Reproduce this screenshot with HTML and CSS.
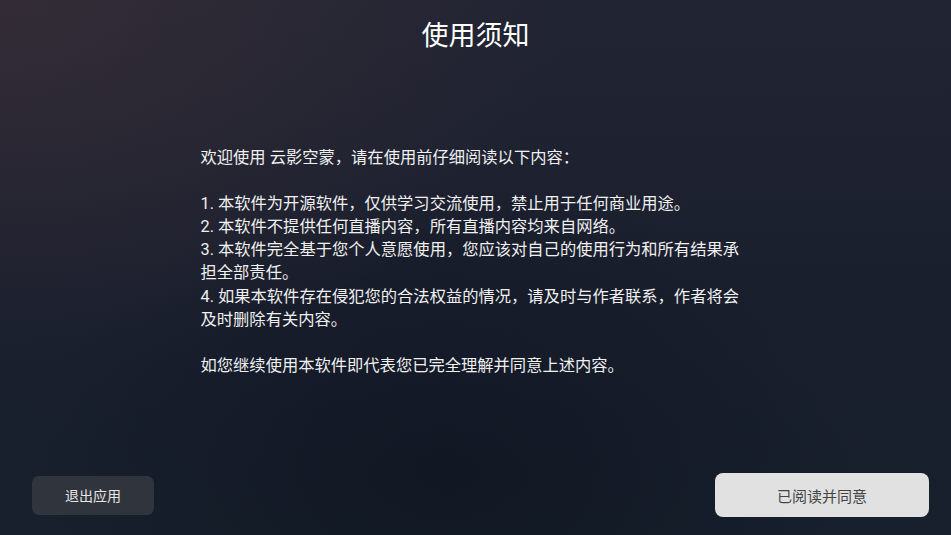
FILE: index.html
```html
<!DOCTYPE html>
<html lang="zh-CN">
<head>
<meta charset="utf-8">
<title>使用须知</title>
<link rel="stylesheet" href="styles.css">
</head>
<body>
<div class="screen">
  <header class="title">使用须知</header>
  <main class="content">
    <div class="notice">
      <p>欢迎使用 云影空蒙，请在使用前仔细阅读以下内容：</p>
      <p>1. 本软件为开源软件，仅供学习交流使用，禁止用于任何商业用途。<br>2. 本软件不提供任何直播内容，所有直播内容均来自网络。<br>3. 本软件完全基于您个人意愿使用，您应该对自己的使用行为和所有结果承担全部责任。<br>4. 如果本软件存在侵犯您的合法权益的情况，请及时与作者联系，作者将会及时删除有关内容。</p>
      <p>如您继续使用本软件即代表您已完全理解并同意上述内容。</p>
    </div>
  </main>
  <footer class="actions">
    <button class="btn btn-exit">退出应用</button>
    <button class="btn btn-agree">已阅读并同意</button>
  </footer>
</div>
</body>
</html>
```

FILE: styles.css
```css
html, body {
  margin: 0;
  padding: 0;
  width: 100%;
  height: 100%;
  overflow: hidden;
}

body {
  font-family: Roboto, "Noto Sans CJK SC", sans-serif;
  color: #f2f2f2;
  background:
    radial-gradient(ellipse 60% 70% at 0% 0%, rgba(64, 50, 56, 0.6), rgba(64, 50, 56, 0) 100%),
    radial-gradient(ellipse 45% 55% at 47% 88%, rgba(8, 14, 24, 0.45), rgba(8, 14, 24, 0) 100%),
    linear-gradient(to bottom, #212433 0%, #1a1f2e 55%, #17202c 100%);
}

.screen {
  height: 100%;
  display: flex;
  flex-direction: column;
}

.title {
  padding-top: 16px;
  height: 40px;
  line-height: 40px;
  text-align: center;
  font-size: 27px;
  color: #ffffff;
}

.content {
  flex: 1;
  display: flex;
  justify-content: center;
  padding-top: 90px;
}

.notice {
  width: 550px;
  font-size: 16.3px;
  line-height: 23.1px;
  color: #f0f0f0;
}

.notice p {
  margin: 0 0 23.1px 0;
}

.actions {
  display: flex;
  justify-content: space-between;
  align-items: center;
  padding: 0 22px 18px 32px;
}

.btn {
  font-family: Roboto, "Noto Sans CJK SC", sans-serif;
  border: none;
  padding: 0;
  display: flex;
  align-items: center;
  justify-content: center;
}

.btn-exit {
  width: 122px;
  height: 39px;
  border-radius: 7px;
  background: #30343d;
  color: #e6e6e6;
  font-size: 14px;
}

.btn-agree {
  width: 214px;
  height: 44px;
  border-radius: 8px;
  background: #e1e1e1;
  color: #444444;
  font-size: 15px;
}
```
